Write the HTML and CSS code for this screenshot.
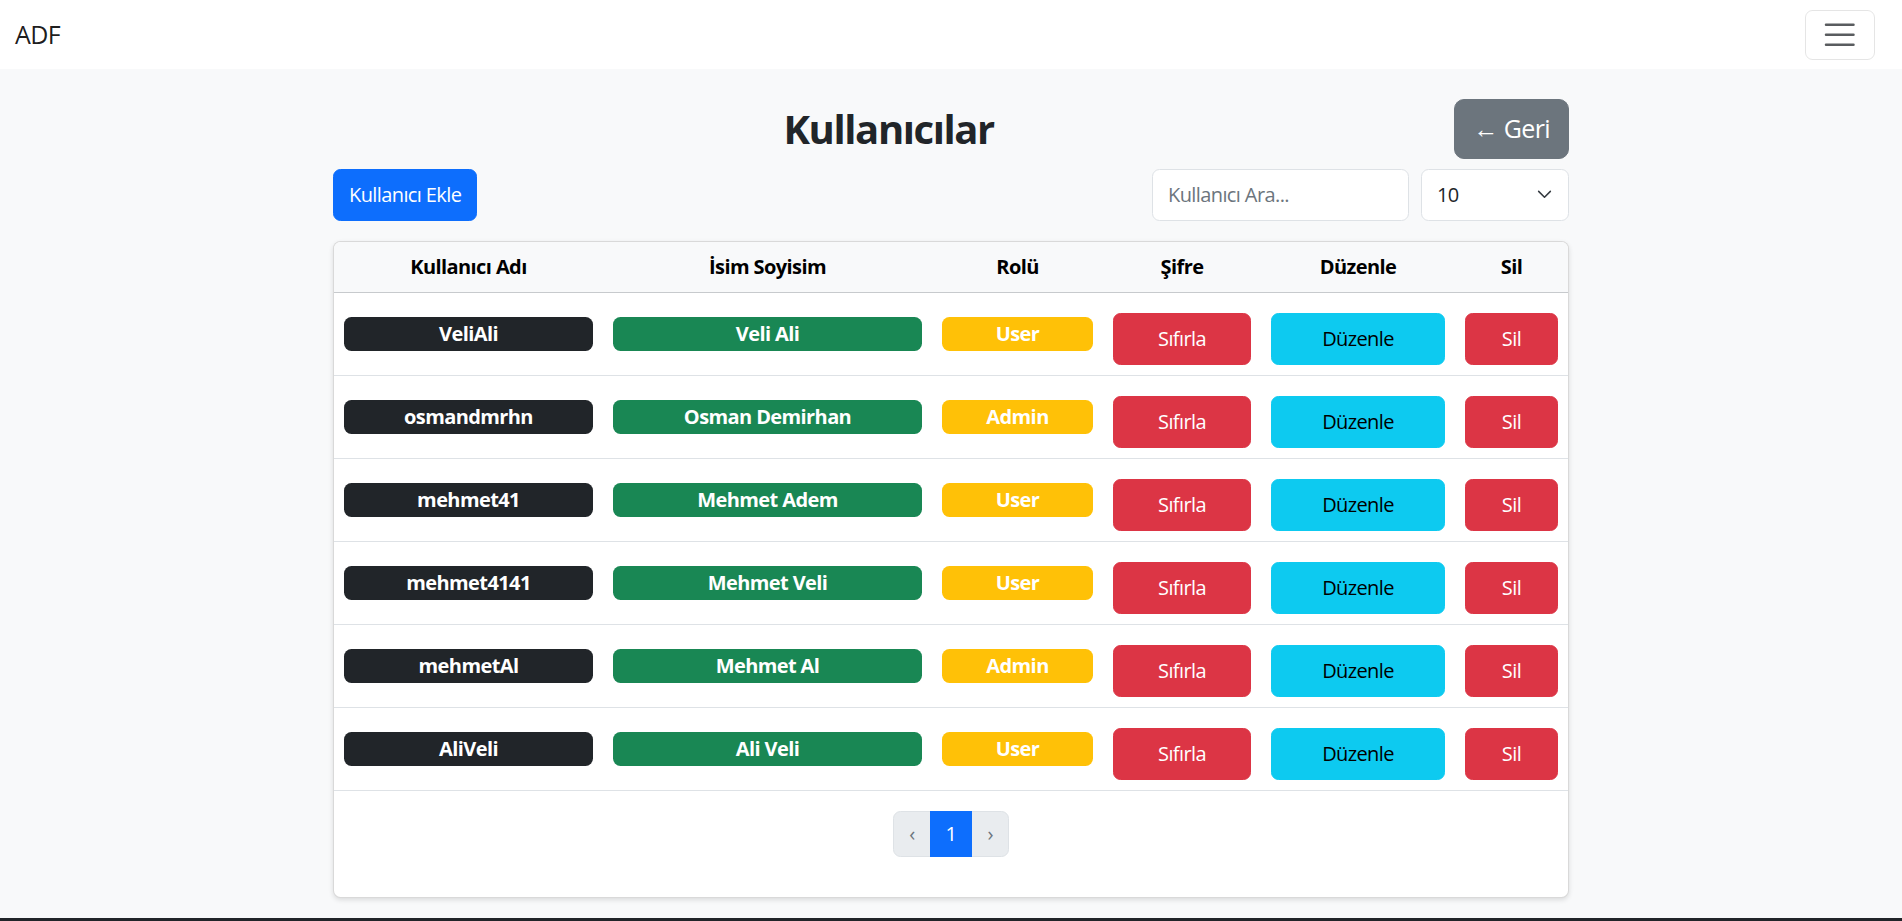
FILE: index.html
```html
<!DOCTYPE html>
<html lang="tr">
<head>
<meta charset="utf-8">
<title>Kullanıcılar</title>
<link rel="stylesheet" href="styles.css">
</head>
<body>
<nav class="navbar">
  <span class="brand">ADF</span>
  <button class="toggler" type="button" aria-label="menu">
    <svg class="toggler-icon" viewBox="0 0 30 30" width="37.5" height="37.5"><path d="M4 7h22M4 15h22M4 23h22" stroke="rgba(33,37,41,0.75)" stroke-width="2" stroke-linecap="round" fill="none"/></svg>
  </button>
</nav>
<main class="container">
  <div class="title-row">
    <h2 class="title">Kullanıcılar</h2>
    <button class="btn btn-lg btn-secondary">← Geri</button>
  </div>
  <div class="tools-row">
    <button class="btn btn-primary">Kullanıcı Ekle</button>
    <div class="filters">
      <input class="form-control search" type="text" placeholder="Kullanıcı Ara...">
      <div class="select-wrap">
        <select class="form-select"><option>10</option><option>25</option><option>50</option></select>
        <svg class="chevron" viewBox="0 0 16 10" width="15" height="9"><path d="M1.5 1.5 8 8l6.5-6.5" fill="none" stroke="#343a40" stroke-width="1.7" stroke-linecap="round" stroke-linejoin="round"/></svg>
      </div>
    </div>
  </div>
  <div class="card">
    <table class="table">
      <colgroup>
        <col class="c1"><col class="c2"><col class="c3"><col class="c4"><col class="c5"><col class="c6">
      </colgroup>
      <thead>
        <tr><th>Kullanıcı Adı</th><th>İsim Soyisim</th><th>Rolü</th><th>Şifre</th><th>Düzenle</th><th>Sil</th></tr>
      </thead>
      <tbody>
        <tr>
          <td><span class="badge bg-dark">VeliAli</span></td>
          <td><span class="badge bg-success">Veli Ali</span></td>
          <td><span class="badge bg-warning">User</span></td>
          <td><button class="btn btn-danger">Sıfırla</button></td>
          <td><button class="btn btn-info">Düzenle</button></td>
          <td><button class="btn btn-danger">Sil</button></td>
        </tr>
        <tr>
          <td><span class="badge bg-dark">osmandmrhn</span></td>
          <td><span class="badge bg-success">Osman Demirhan</span></td>
          <td><span class="badge bg-warning">Admin</span></td>
          <td><button class="btn btn-danger">Sıfırla</button></td>
          <td><button class="btn btn-info">Düzenle</button></td>
          <td><button class="btn btn-danger">Sil</button></td>
        </tr>
        <tr>
          <td><span class="badge bg-dark">mehmet41</span></td>
          <td><span class="badge bg-success">Mehmet Adem</span></td>
          <td><span class="badge bg-warning">User</span></td>
          <td><button class="btn btn-danger">Sıfırla</button></td>
          <td><button class="btn btn-info">Düzenle</button></td>
          <td><button class="btn btn-danger">Sil</button></td>
        </tr>
        <tr>
          <td><span class="badge bg-dark">mehmet4141</span></td>
          <td><span class="badge bg-success">Mehmet Veli</span></td>
          <td><span class="badge bg-warning">User</span></td>
          <td><button class="btn btn-danger">Sıfırla</button></td>
          <td><button class="btn btn-info">Düzenle</button></td>
          <td><button class="btn btn-danger">Sil</button></td>
        </tr>
        <tr>
          <td><span class="badge bg-dark">mehmetAl</span></td>
          <td><span class="badge bg-success">Mehmet Al</span></td>
          <td><span class="badge bg-warning">Admin</span></td>
          <td><button class="btn btn-danger">Sıfırla</button></td>
          <td><button class="btn btn-info">Düzenle</button></td>
          <td><button class="btn btn-danger">Sil</button></td>
        </tr>
        <tr>
          <td><span class="badge bg-dark">AliVeli</span></td>
          <td><span class="badge bg-success">Ali Veli</span></td>
          <td><span class="badge bg-warning">User</span></td>
          <td><button class="btn btn-danger">Sıfırla</button></td>
          <td><button class="btn btn-info">Düzenle</button></td>
          <td><button class="btn btn-danger">Sil</button></td>
        </tr>
      </tbody>
    </table>
    <div class="pager-wrap">
      <ul class="pagination">
        <li class="page-item disabled"><span class="page-link">‹</span></li>
        <li class="page-item active"><span class="page-link">1</span></li>
        <li class="page-item disabled"><span class="page-link">›</span></li>
      </ul>
    </div>
  </div>
</main>
<footer class="footer"></footer>
</body>
</html>
```

FILE: styles.css
```css
* { box-sizing: border-box; }
html, body { margin: 0; padding: 0; }
body {
  background: #f8f9fa;
  font-family: "Open Sans", "Noto Sans", "Liberation Sans", sans-serif;
  font-size: 20px;
  line-height: 1.5;
  letter-spacing: -0.03em;
  color: #212529;
}
.navbar {
  height: 69px;
  background: #fff;
  display: flex;
  align-items: center;
  justify-content: space-between;
  padding: 0 27px 0 15px;
}
.brand {
  font-size: 25px;
  color: rgba(0,0,0,0.9);
  line-height: 1;
}
.toggler {
  width: 70px;
  height: 50px;
  border: 1px solid rgba(0,0,0,0.1);
  border-radius: 7.5px;
  background: transparent;
  display: flex;
  align-items: center;
  justify-content: center;
  padding: 0;
}
.toggler-icon { display: block; }
.container {
  width: 1236px;
  margin: 30px auto 20px;
}
.title-row {
  display: flex;
  align-items: center;
}
.title {
  flex: 1;
  margin: 0;
  padding-right: 10px;
  text-align: center;
  font-size: 40px;
  font-weight: 700;
  line-height: 1.2;
  letter-spacing: -0.035em;
  color: #212529;
}
.btn {
  font-family: inherit;
  font-size: 20px;
  line-height: 30px;
  letter-spacing: inherit;
  padding: 10px 15px;
  border: 1px solid transparent;
  border-radius: 7.5px;
  cursor: pointer;
  text-align: center;
  color: #fff;
}
.btn-lg {
  font-size: 25px;
  line-height: 37.5px;
  padding: 10px 18px;
  border-radius: 10px;
}
.btn-secondary { background: #6c757d; border-color: #6c757d; }
.btn-primary { background: #0d6efd; border-color: #0d6efd; }
.btn-danger { background: #dc3545; border-color: #dc3545; }
.btn-info { background: #0dcaf0; border-color: #0dcaf0; color: #000; }
.tools-row {
  display: flex;
  justify-content: space-between;
  align-items: center;
  margin-top: 10px;
}
.filters {
  display: flex;
  gap: 12px;
}
.form-control, .form-select {
  font-family: inherit;
  font-size: 20px;
  line-height: 30px;
  letter-spacing: inherit;
  height: 52px;
  padding: 10px 15px;
  border: 1px solid #dee2e6;
  border-radius: 7.5px;
  background: #fff;
  color: #212529;
}
.form-control::placeholder { color: #6c757d; }
.search { width: 257px; }
.select-wrap { position: relative; width: 148px; }
.form-select {
  width: 100%;
  appearance: none;
  -webkit-appearance: none;
}
.chevron {
  position: absolute;
  right: 17px;
  top: 21px;
  pointer-events: none;
}
.card {
  margin-top: 20px;
  background: #fff;
  border: 1px solid rgba(0,0,0,0.15);
  border-radius: 7.5px;
  box-shadow: 0 2px 5px rgba(0,0,0,0.12);
  overflow: hidden;
}
.table {
  width: 100%;
  border-collapse: collapse;
  table-layout: fixed;
}
.c1 { width: 269px; }
.c2 { width: 329px; }
.c3 { width: 171px; }
.c4 { width: 158px; }
.c5 { width: 194px; }
.c6 { width: 113px; }
.table th {
  background: #f8f9fa;
  font-weight: 700;
  color: #000;
  padding: 10px;
  line-height: 30px;
  text-align: center;
  border-bottom: 1px solid #c7cacd;
}
.table td {
  padding: 10px;
  vertical-align: middle;
  text-align: center;
  border-bottom: 1px solid #dee2e6;
}
.table td .btn {
  display: block;
  width: 100%;
  margin-top: 10px;
}
.badge {
  display: block;
  font-size: 20px;
  font-weight: 700;
  line-height: 20px;
  padding: 7px 8px;
  border-radius: 7.5px;
  color: #fff;
  white-space: nowrap;
}
.bg-dark { background: #212529; }
.bg-success { background: #198754; }
.bg-warning { background: #ffc107; }
.pager-wrap {
  display: flex;
  justify-content: center;
  padding: 20px 0 40px;
}
.pagination {
  display: flex;
  list-style: none;
  margin: 0;
  padding: 0;
}
.page-link {
  display: block;
  font-size: 20px;
  line-height: 30px;
  padding: 7px 15px;
  border: 1px solid #dee2e6;
  margin-left: -1px;
}
.page-item:first-child .page-link { border-radius: 7.5px 0 0 7.5px; margin-left: 0; }
.page-item:last-child .page-link { border-radius: 0 7.5px 7.5px 0; }
.page-item.disabled .page-link { background: #e9ecef; color: #6c757d; }
.page-item.active .page-link { background: #0d6efd; border-color: #0d6efd; color: #fff; position: relative; z-index: 1; }
.footer {
  background: #212529;
  height: 3px;
}
```
